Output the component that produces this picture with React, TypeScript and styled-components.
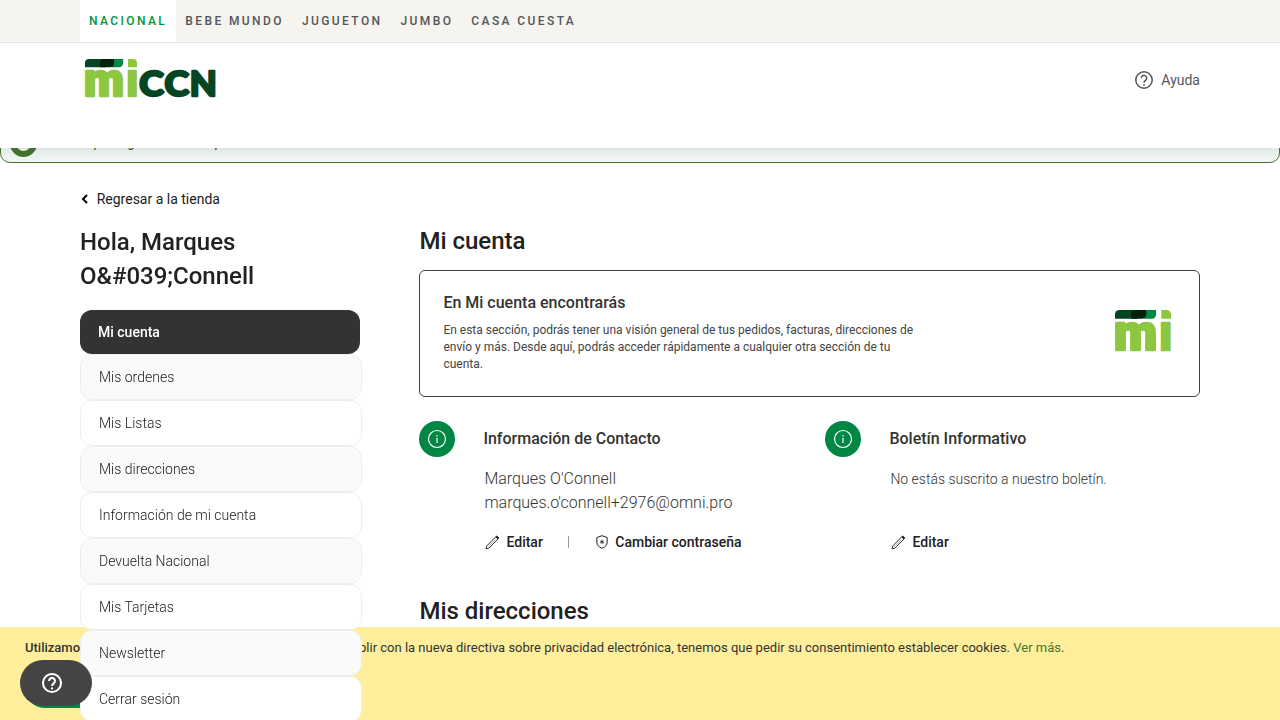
import React from "react";
import styled, { createGlobalStyle, css } from "styled-components";

const GlobalStyle = createGlobalStyle`
  *, *::before, *::after { box-sizing: border-box; }
  body {
    margin: 0;
    height: 720px;
    overflow: hidden;
    background: #fff;
    color: #212121;
    font-family: Roboto, "Liberation Sans", sans-serif;
    font-size: 14px;
  }
  h1, h2, h3, p, ul { margin: 0; padding: 0; }
  a { color: inherit; text-decoration: none; }
  svg { display: block; flex: none; overflow: visible; }
`;

const Page = styled.div`
  height: 720px;
  overflow: hidden;
`;

const Header = styled.header`
  position: relative;
  z-index: 5;
  height: 148px;
  background: #fff;
  box-shadow: 0 0 14px rgba(0, 0, 0, 0.14);
`;

const StoreBar = styled.nav`
  display: flex;
  height: 43px;
  padding: 0 80px;
  background: #f5f4ef;
  border-bottom: 1px solid #e5e5e5;
`;

const StoreLink = styled.a<{ $active?: boolean }>`
  display: flex;
  align-items: center;
  height: 42px;
  padding: 0 9px;
  font-size: 12px;
  font-weight: 500;
  letter-spacing: 2.4px;
  color: ${(p) => (p.$active ? "#009639" : "#54565b")};
  background: ${(p) => (p.$active ? "#fff" : "transparent")};
`;

const Brand = styled.div`
  display: flex;
  justify-content: space-between;
  align-items: center;
  height: 74px;
  padding: 0 80px 2px 85px;
`;

const Help = styled.a`
  display: flex;
  align-items: center;
  gap: 7px;
  padding-top: 2px;
  color: #54565b;
`;

const Message = styled.div`
  display: flex;
  align-items: center;
  gap: 9px;
  height: 42px;
  margin-top: -27px;
  padding: 0 10px 0 10px;
  border: 1px solid #46752c;
  border-radius: 10px;
  background: #f0f6f3;
  color: #46752c;
  font-size: 13px;
  font-weight: 500;
`;

const MessageIcon = styled.span`
  width: 27px;
  height: 27px;
  margin-left: -1px;
  border: 6px solid #46752c;
  border-radius: 50%;
  margin-top: 3px;
`;

const Main = styled.main`
  padding: 26px 80px 0;
`;

const BackLink = styled.a`
  display: flex;
  align-items: center;
  gap: 7.7px;
  height: 20px;
  padding-left: 1px;
`;

const Columns = styled.div`
  display: grid;
  grid-template-columns: 282px 780.6px;
  column-gap: 57.4px;
  align-items: start;
`;

const Sidebar = styled.aside`
  position: relative;
  z-index: 3;
  padding-top: 16px;
`;

const Greeting = styled.h2`
  font-size: 24px;
  line-height: 34px;
  font-weight: 500;
  margin-bottom: 17px;
`;

const Menu = styled.ul`
  list-style: none;
`;

const MenuItem = styled.li<{ $active?: boolean }>`
  display: flex;
  align-items: center;
  height: 46px;
  padding: 0 18px;
  border: 1px solid #eee;
  border-radius: 12px;
  background: #fff;
  font-weight: 300;
  &:nth-child(even) { background: #fafafa; }
  ${(p) =>
    p.$active &&
    css`
      width: 280px;
      height: 44px;
      border: 0;
      background: #333;
      color: #fff;
      font-weight: 500;
    `}
`;

const Content = styled.section`
  padding-top: 14px;
`;

const Title = styled.h1`
  font-size: 24px;
  line-height: 36px;
  font-weight: 500;
`;

const Intro = styled.div`
  display: flex;
  justify-content: space-between;
  height: 127px;
  margin: 11px 0 24px;
  padding: 20px 28px 0 23px;
  border: 1px solid #414141;
  border-radius: 6px;
  color: #333;
`;

const IntroText = styled.div`
  width: 480px;
  h3 { font-size: 16px; line-height: 24px; font-weight: 500; margin-bottom: 7px; }
  p { font-size: 12px; line-height: 17px; color: #444; }
`;

const IntroMark = styled.div`
  padding-top: 19px;
`;

const Cards = styled.div`
  display: grid;
  grid-template-columns: 406px 1fr;
`;

const Card = styled.article`
  display: flex;
  gap: 28px;
  height: 172px;
`;

const Disc = styled.span`
  display: flex;
  align-items: center;
  justify-content: center;
  width: 36px;
  height: 36px;
  border-radius: 50%;
  background: #008744;
`;

const CardBody = styled.div`
  color: #333;
  h3 { font-size: 16px; line-height: 36px; font-weight: 500; }
`;

const CardText = styled.p<{ $size: number }>`
  height: 48px;
  margin: 10px 0 15px 1px;
  font-size: ${(p) => p.$size}px;
  line-height: 24px;
  font-weight: 300;
`;

const Actions = styled.div`
  display: flex;
  align-items: center;
  height: 24px;
  padding-left: 1.4px;
  color: #212121;
  font-weight: 500;
`;

const Action = styled.a`
  display: flex;
  align-items: center;
  gap: 7.2px;
`;

const Divider = styled.span`
  width: 1px;
  height: 12px;
  margin: 0 27px 0 25.2px;
  background: #999;
`;

const CookieBar = styled.div`
  position: fixed;
  z-index: 2;
  left: 0;
  right: 0;
  bottom: 0;
  height: 93px;
  padding: 12px 20px 12px 25px;
  background: #ffee9c;
  color: #333;
  font-size: 13px;
  line-height: 18px;
  strong { font-weight: 500; margin-right: -2.5px; }
  a { color: #46752c; }
`;

const CookieButton = styled.button`
  display: block;
  height: 40px;
  margin-top: 11px;
  padding: 0 24px;
  border: 0;
  border-radius: 20px;
  background: #008744;
  color: #fff;
  font: 500 14px Roboto, sans-serif;
`;

const HelpWidget = styled.button`
  position: fixed;
  z-index: 6;
  left: 20px;
  bottom: 14px;
  width: 72px;
  height: 46px;
  padding: 0 0 0 21px;
  border: 0;
  border-radius: 23px;
  background: #444;
  color: #fff;
`;

const QuestionIcon = ({ size, stroke }: { size: number; stroke: number }) => (
  <svg width={size} height={size} viewBox="0 0 20 20" fill="none" stroke="currentColor" strokeWidth={stroke}>
    <circle cx="10" cy="10" r="8.2" />
    <path d="M7.3 8.1a2.7 2.7 0 1 1 4.5 2c-1.1.9-1.8 1.3-1.8 2.6" />
    <path d="M10 14v1.7" />
  </svg>
);

const InfoIcon = () => (
  <svg width="20" height="20" viewBox="0 0 20 20" fill="none" stroke="#fff" strokeWidth="1.2">
    <circle cx="10" cy="10" r="8.5" />
    <path d="M10 8.7v5.4M10 6v1.4" />
  </svg>
);

const PencilIcon = () => (
  <svg width="14.5" height="15" viewBox="0 0 15 16" fill="none" stroke="currentColor" strokeLinejoin="round">
    <path d="M.8 14.9l.9-3.3L11.2 2l2.4 2.3-9.5 9.6z" />
    <path d="M3.4 12.3l7.4-7.4" strokeWidth=".4" />
    <path d="M11.3 1.9l1-.9 2.2 2.2-1 1z" fill="currentColor" />
  </svg>
);

const ShieldIcon = () => (
  <svg width="12" height="14" viewBox="0 0 12 14" fill="none" stroke="currentColor">
    <path d="M6 .7l5.2 1.9v4.5c0 3-2.1 5-5.2 6.2C2.9 12.1.8 10.1.8 7.1V2.6z" />
    <path d="M6 4.7v4.4M4.1 5.8l3.8 2.2M7.9 5.8L4.1 8" strokeWidth=".8" />
  </svg>
);

const MarkShapes = () => (
  <>
    <path d="M0 8.2V4a4 4 0 0 1 4-4h17v8.2z" fill="#054524" />
    <path d="M27 0h11.2v4a4.2 4.2 0 0 1-4.2 4.2h-7z" fill="#008744" />
    <path d="M19 0h10v4.2a4 4 0 0 1-4 4h-10V4a4 4 0 0 1 4-4z" fill="#03210c" />
    <path d="M43 0h5a4 4 0 0 1 4 4v4.2h-9z" fill="#8dc63f" />
    <g fill="#8dc63f" stroke="#8dc63f" strokeWidth="2.4" strokeLinejoin="round" fontFamily="Roboto" fontWeight="900" fontSize="46">
      <text x="-1" y="37.4" textLength="40" lengthAdjust="spacingAndGlyphs">m</text>
      <text x="41.2" y="37.4" textLength="12" lengthAdjust="spacingAndGlyphs">ı</text>
    </g>
  </>
);

const Logo = () => (
  <svg width="132" height="40" viewBox="0 0 132 40">
    <MarkShapes />
    <g fill="#054524" stroke="#054524" strokeWidth="2.4" strokeLinejoin="round" fontFamily="Lato" fontWeight="900" fontSize="34">
      <text x="54.3" y="37.3" textLength="24.5" lengthAdjust="spacingAndGlyphs">C</text>
      <text x="79.6" y="37.3" textLength="24.5" lengthAdjust="spacingAndGlyphs">C</text>
      <text x="104.8" y="37.3" textLength="27" lengthAdjust="spacingAndGlyphs">N</text>
    </g>
  </svg>
);

const stores = ["NACIONAL", "BEBE MUNDO", "JUGUETON", "JUMBO", "CASA CUESTA"];
const menu = [
  "Mi cuenta",
  "Mis ordenes",
  "Mis Listas",
  "Mis direcciones",
  "Información de mi cuenta",
  "Devuelta Nacional",
  "Mis Tarjetas",
  "Newsletter",
  "Cerrar sesión",
];

export default function App() {
  return (
    <Page>
      <GlobalStyle />
      <Header>
        <StoreBar>
          {stores.map((s, i) => (
            <StoreLink key={s} $active={i === 0}>{s}</StoreLink>
          ))}
        </StoreBar>
        <Brand>
          <Logo />
          <Help>
            <QuestionIcon size={20} stroke={1.5} />
            Ayuda
          </Help>
        </Brand>
      </Header>
      <Message>
        <MessageIcon />
        Gracias por registrarse en Supermercados.
      </Message>
      <Main>
        <BackLink>
          <svg width="8" height="10" viewBox="0 0 8 10" fill="none" stroke="#000" strokeWidth="2">
            <path d="M6 1L2 5l4 4" />
          </svg>
          Regresar a la tienda
        </BackLink>
        <Columns>
          <Sidebar>
            <Greeting>Hola, Marques O&amp;#039;Connell</Greeting>
            <Menu>
              {menu.map((m, i) => (
                <MenuItem key={m} $active={i === 0}>{m}</MenuItem>
              ))}
            </Menu>
          </Sidebar>
          <Content>
            <Title>Mi cuenta</Title>
            <Intro>
              <IntroText>
                <h3>En Mi cuenta encontrarás</h3>
                <p>
                  En esta sección, podrás tener una visión general de tus pedidos, facturas, direcciones de
                  envío y más. Desde aquí, podrás acceder rápidamente a cualquier otra sección de tu cuenta.
                </p>
              </IntroText>
              <IntroMark>
                <svg width="56" height="42" viewBox="0 0 52 39">
                  <MarkShapes />
                </svg>
              </IntroMark>
            </Intro>
            <Cards>
              <Card>
                <Disc><InfoIcon /></Disc>
                <CardBody>
                  <h3>Información de Contacto</h3>
                  <CardText $size={16}>
                    Marques O'Connell
                    <br />
                    marques.o'connell+2976@omni.pro
                  </CardText>
                  <Actions>
                    <Action><PencilIcon />Editar</Action>
                    <Divider />
                    <Action><ShieldIcon />Cambiar contraseña</Action>
                  </Actions>
                </CardBody>
              </Card>
              <Card>
                <Disc><InfoIcon /></Disc>
                <CardBody>
                  <h3>Boletín Informativo</h3>
                  <CardText $size={14}>No estás suscrito a nuestro boletín.</CardText>
                  <Actions>
                    <Action><PencilIcon />Editar</Action>
                  </Actions>
                </CardBody>
              </Card>
            </Cards>
            <Title>Mis direcciones</Title>
          </Content>
        </Columns>
      </Main>
      <CookieBar>
        <p>
          <strong>Utilizamos cookies para mejorar su experiencia.</strong> Para cumplir con la nueva directiva
          sobre privacidad electrónica, tenemos que pedir su consentimiento establecer cookies. <a>Ver más</a>.
        </p>
        <CookieButton>Permitir cookies</CookieButton>
      </CookieBar>
      <HelpWidget aria-label="Ayuda">
        <QuestionIcon size={22} stroke={1.9} />
      </HelpWidget>
    </Page>
  );
}
